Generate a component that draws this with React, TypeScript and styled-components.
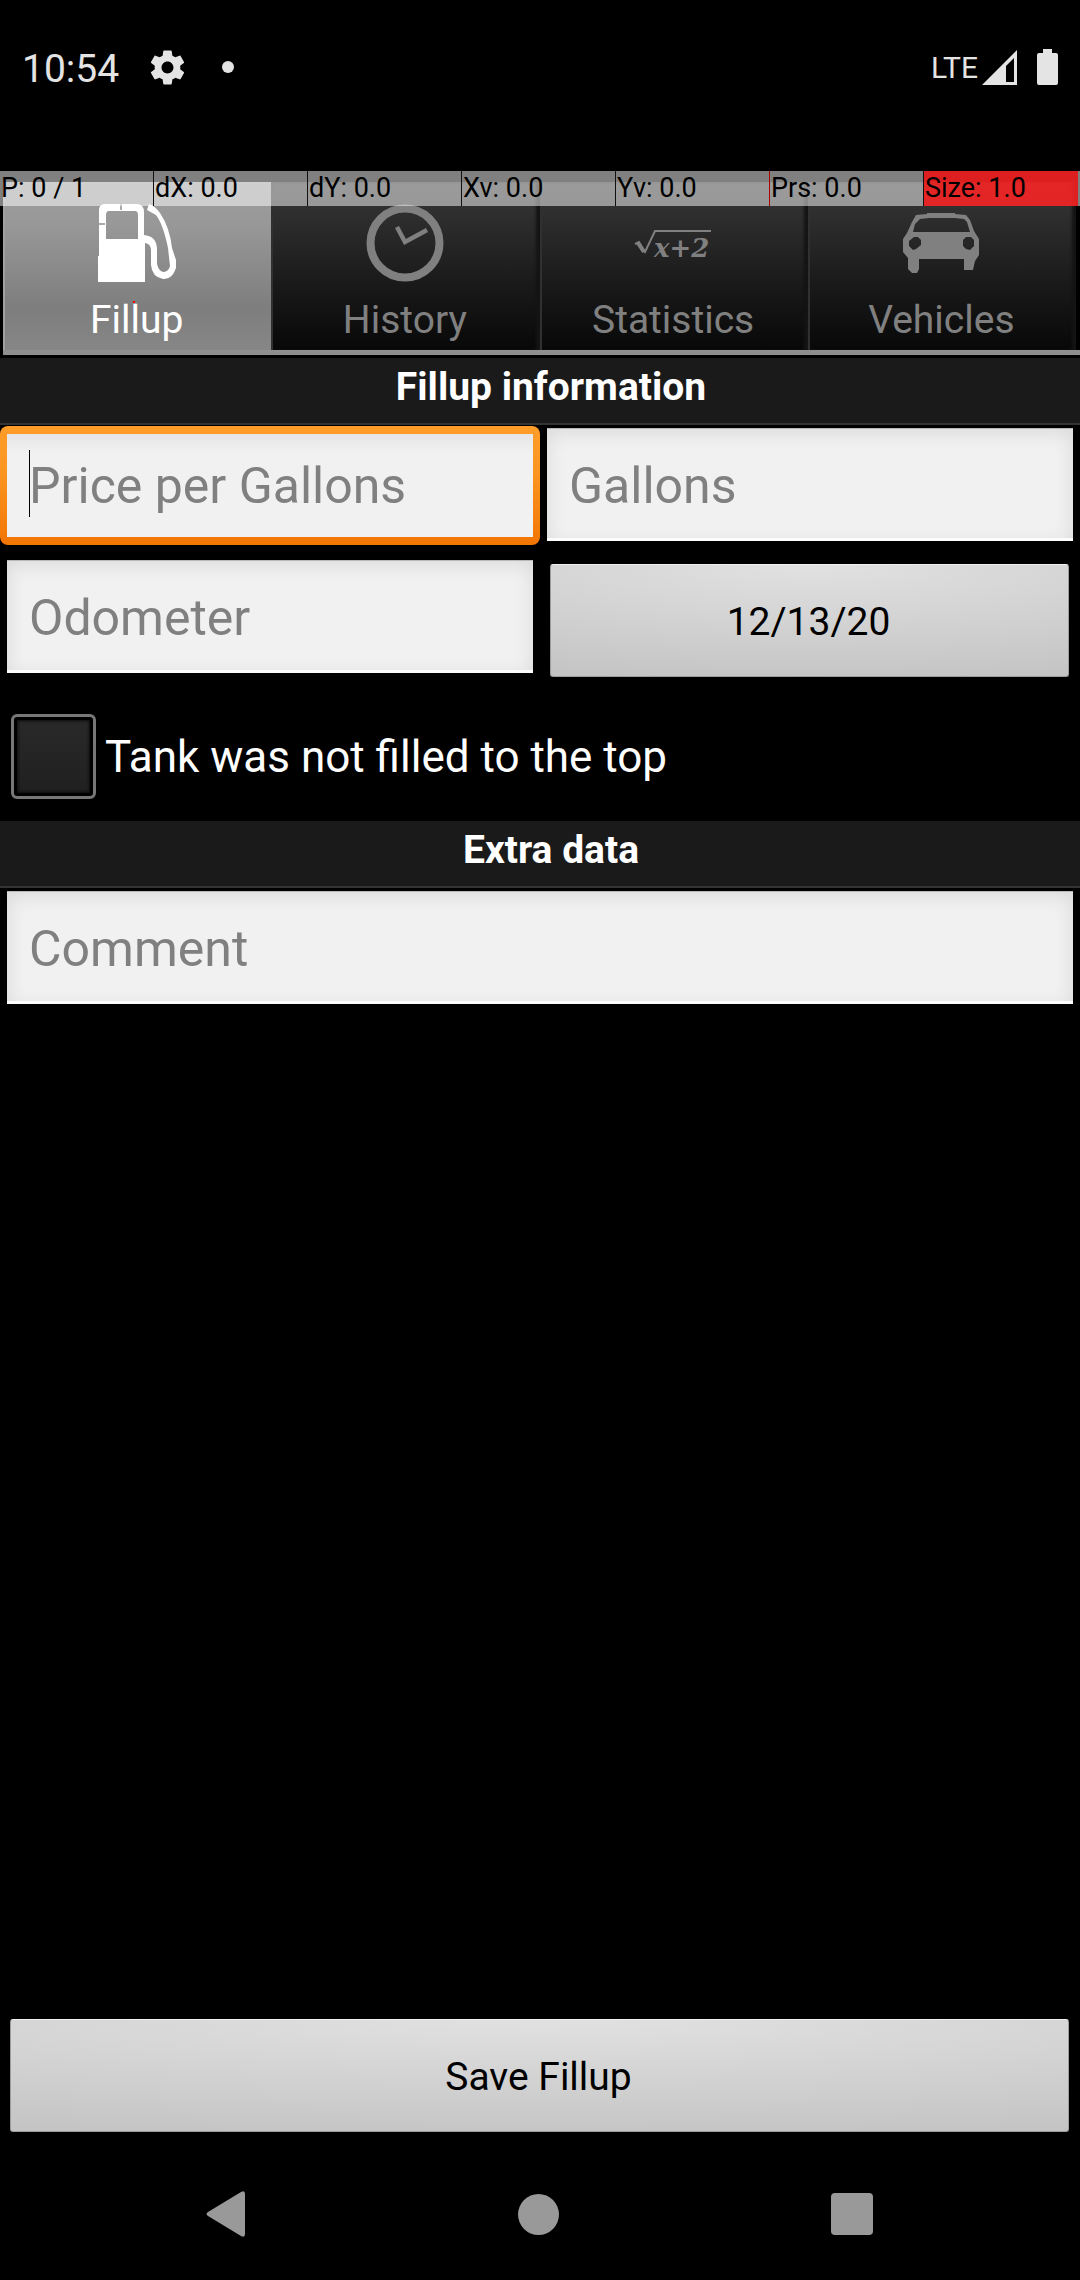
import React from "react";
import styled, { createGlobalStyle, css } from "styled-components";

const GlobalStyle = createGlobalStyle`
  *, *::before, *::after { box-sizing: border-box; }
  body { margin: 0; background: #000; color: #fff; font-family: Roboto, "Liberation Sans", sans-serif; }
  button, input { font: inherit; margin: 0; border-radius: 0; outline: none; }
`;

const Page = styled.div`
  position: relative;
  display: flex;
  flex-direction: column;
  min-height: 100vh;
  background: #000;
`;

const StatusBar = styled.header`
  display: flex;
  align-items: center;
  justify-content: space-between;
  height: 134px;
  padding: 0 22px;
  color: #e4e4e4;
`;

const StatusGroup = styled.div`
  display: flex;
  align-items: center;
`;

const Clock = styled.time`
  font-size: 39px;
  line-height: 46px;
  padding-top: 4px;
  margin-right: 28px;
`;

const Dot = styled.span`
  width: 12px;
  height: 12px;
  margin-left: 34px;
  border-radius: 50%;
  background: #e4e4e4;
`;

const Network = styled.span`
  font-size: 30px;
  line-height: 36px;
  padding-top: 2px;
  margin-right: 4px;
`;

const Battery = styled.svg`
  margin-left: 20px;
`;

const PointerBar = styled.div`
  position: absolute;
  z-index: 1;
  top: 171px;
  left: 0;
  right: 0;
  display: flex;
  height: 35px;
  color: #000;
  font-size: 27px;
  line-height: 35px;
  pointer-events: none;

  &::after {
    content: "";
    width: 2px;
    background: rgba(255, 255, 255, 0.5);
  }
`;

const PointerCell = styled.span<{ $edge?: string; $alert?: boolean }>`
  flex: 1;
  padding-left: 1px;
  white-space: nowrap;
  border-right: 1px solid ${(p) => p.$edge ?? "#111"};
  background: ${(p) => (p.$alert ? "rgba(255, 36, 36, 0.87)" : "rgba(255, 255, 255, 0.5)")};
`;

const PointerMark = styled.i`
  position: absolute;
  top: 301px;
  left: 133px;
  width: 2px;
  height: 2px;
  background: #f00;
`;

const Tabs = styled.nav`
  display: flex;
  margin: 48px 0 3px 3px;
  padding-right: 4px;
  border-bottom: 5px solid #8f8f8f;
`;

const Tab = styled.button<{ $selected?: boolean }>`
  flex: 1;
  display: flex;
  flex-direction: column;
  align-items: center;
  gap: 15px;
  height: 168px;
  padding: 22px 1px 0 0;
  border: 0;
  font-size: 39px;
  line-height: 46px;
  color: #808080;
  background: linear-gradient(#363636, #2e2e2e 20%, #1a1a1a 60%, #080808);
  box-shadow: inset 2px 0 #303030, inset -4px 0 3px #141414;

  ${(p) =>
    p.$selected &&
    css`
      color: #fff;
      background: linear-gradient(#9e9e9e, #989898 25%, #7e7e7e 75%, #868686);
      box-shadow: inset 2px 0 #a0a0a0;
    `}
`;

const SectionTitle = styled.h2`
  margin: 0;
  padding: 1px 0 7px 22px;
  border-bottom: 2px solid #343434;
  background: #1a1a1a;
  font-size: 39px;
  line-height: 57px;
  font-weight: 700;
  text-align: center;
`;

const FieldGrid = styled.div`
  display: grid;
  grid-template-columns: 1fr 1fr;
  row-gap: 12px;
`;

const Field = styled.input<{ $active?: boolean }>`
  display: block;
  min-width: 0;
  height: 113px;
  margin: 3px 7px 4px;
  padding: 2px 22px 0;
  border: 0;
  font-size: 50px;
  color: #000;
  background: #f1f1f1;
  box-shadow: inset 0 1px #b8b8b8, inset 0 -3px #fcfcfc, inset 0 4px 20px rgba(0, 0, 0, 0.1);

  &::placeholder {
    color: #808080;
    opacity: 1;
  }

  ${(p) =>
    p.$active &&
    css`
      height: 119px;
      margin: 1px 0 0;
      padding-top: 0;
      border: solid transparent;
      border-width: 8px 7px;
      border-radius: 8px;
      caret-color: transparent;
      background:
        linear-gradient(#000, #000) 22px 16px / 1px 67px no-repeat padding-box,
        linear-gradient(#e6e6e6, #f1f1f1 18%) padding-box,
        linear-gradient(#ff9d2a, #fb9520 40%, #f27503) border-box;
      box-shadow: none;
    `}
`;

const Comment = styled(Field)`
  width: calc(100% - 14px);
`;

const PushButton = styled.button`
  height: 113px;
  margin: 7px 11px 0 10px;
  padding: 2px 2px 0 0;
  border: 1px solid #9c9c9c;
  border-top-color: #f0f0f0;
  border-radius: 3px;
  font-size: 39px;
  color: #000;
  background: radial-gradient(ellipse 130% 110% at 50% 0, #e1e1e1, #c3c3c3);
`;

const CheckRow = styled.label`
  display: flex;
  align-items: center;
  gap: 9px;
  padding: 37px 11px 22px;
  font-size: 44px;
  line-height: 52px;
`;

const CheckBox = styled.input`
  appearance: none;
  flex: none;
  width: 85px;
  height: 85px;
  border: 3px solid #777;
  border-radius: 6px;
  background: linear-gradient(#292929, #202020);
  box-shadow: inset 0 0 0 3px #000, inset 0 0 3px 4px #0c0c0c;
`;

const Footer = styled.div`
  display: grid;
  margin: auto 0 16px;
`;

const NavBar = styled.nav`
  display: grid;
  grid-template-columns: repeat(3, 29%);
  justify-content: center;
  height: 132px;
  padding-right: 2px;
`;

const NavButton = styled.button`
  display: flex;
  align-items: center;
  justify-content: center;
  padding: 0;
  border: 0;
  background: none;
`;

const PumpIcon = () => (
  <svg width="78" height="78" viewBox="0 0 78 78" fill="none" aria-hidden="true">
    <path
      fillRule="evenodd"
      fill="#fff"
      d="M6 0H40Q46 1 46 8V31Q58 32 59 44V60Q61 68 66 68Q71 67 72 62L70 44Q65 20 58 11L49 6L51 0Q57 2 62 9Q72 24 74 44L78 56V64Q74 76 65 75Q54 73 53 61V46Q53 40 47 39V78H0V52H1V6Q1 1 6 0ZM11 7Q8 7 8 11V35H40V11Q40 7 37 7Z"
    />
    <path d="M23 0V6M1 20H7" stroke="#aaa" strokeWidth="2" />
  </svg>
);

const ClockIcon = () => (
  <svg width="78" height="78" viewBox="0 0 78 78" fill="none" stroke="#808080" aria-hidden="true">
    <circle cx="39" cy="39" r="34.5" strokeWidth="8" />
    <path d="M31 23L39 38L61 26" strokeWidth="4.5" />
  </svg>
);

const FormulaIcon = () => (
  <svg width="78" height="78" viewBox="0 0 78 78" aria-hidden="true">
    <path d="M1 40L5 38L11 48L21 27H77" fill="none" stroke="#808080" strokeWidth="2" />
    <path d="M4 39L10 48" stroke="#808080" strokeWidth="4" />
    <text
      x="20"
      y="53"
      fill="#808080"
      fontFamily="DejaVu Serif, serif"
      fontSize="26"
      fontWeight="700"
      fontStyle="italic"
    >
      x+2
    </text>
  </svg>
);

const CarIcon = () => (
  <svg width="78" height="78" viewBox="0 0 78 78" aria-hidden="true">
    <path
      fillRule="evenodd"
      fill="#808080"
      d="M14 11L25 10V9H53V10L64 11L68 16L72 27L77 35V51L73 57L71 66H62V55H17V65L15 69H10L6 65V54L1 48V35L5 29L10 18ZM18 15L13 20L11 28H68L65 18L62 15L53 14H27ZM12 33L7 37V42L11 46L14 45L19 41V36L16 33ZM64 33L61 36V42L64 45L68 46L72 42V36L69 33Z"
    />
  </svg>
);

const pointerCells = [
  { text: "P: 0 / 1" },
  { text: "dX: 0.0" },
  { text: "dY: 0.0" },
  { text: "Xv: 0.0" },
  { text: "Yv: 0.0", edge: "#a00" },
  { text: "Prs: 0.0" },
  { text: "Size: 1.0", edge: "transparent", alert: true },
];

const tabs = [
  { label: "Fillup", Icon: PumpIcon },
  { label: "History", Icon: ClockIcon },
  { label: "Statistics", Icon: FormulaIcon },
  { label: "Vehicles", Icon: CarIcon },
];

export default function App() {
  return (
    <Page>
      <GlobalStyle />
      <StatusBar>
        <StatusGroup>
          <Clock>10:54</Clock>
          <svg width="41" height="41" viewBox="0 0 24 24" fill="#e4e4e4" aria-hidden="true">
            <path d="M19.43 12.98c.04-.32.07-.64.07-.98s-.03-.66-.07-.98l2.11-1.65c.19-.15.24-.42.12-.64l-2-3.46c-.12-.22-.39-.3-.61-.22l-2.49 1c-.52-.4-1.08-.73-1.69-.98l-.38-2.65C14.46 2.18 14.25 2 14 2h-4c-.25 0-.46.18-.49.42l-.38 2.65c-.61.25-1.17.59-1.69.98l-2.49-1c-.23-.09-.49 0-.61.22l-2 3.46c-.13.22-.07.49.12.64l2.11 1.65c-.04.32-.07.65-.07.98s.03.66.07.98l-2.11 1.65c-.19.15-.24.42-.12.64l2 3.46c.12.22.39.3.61.22l2.49-1c.52.4 1.08.73 1.69.98l.38 2.65c.03.24.24.42.49.42h4c.25 0 .46-.18.49-.42l.38-2.65c.61-.25 1.17-.59 1.69-.98l2.49 1c.23.09.49 0 .61-.22l2-3.46c.12-.22.07-.49-.12-.64l-2.11-1.65zM12 15.5c-1.93 0-3.5-1.57-3.5-3.5s1.57-3.5 3.5-3.5 3.5 1.57 3.5 3.5-1.57 3.5-3.5 3.5z" />
          </svg>
          <Dot />
        </StatusGroup>
        <StatusGroup>
          <Network>LTE</Network>
          <svg width="35" height="35" viewBox="0 0 35 35" fill="#e4e4e4" aria-hidden="true">
            <path fillRule="evenodd" d="M35 0V35H0ZM32 8L24 16V32H32Z" />
          </svg>
          <Battery width="21" height="36" viewBox="0 0 21 36" fill="#e4e4e4" aria-hidden="true">
            <path d="M6 0H15V4H19Q21 4 21 6V34Q21 36 19 36H2Q0 36 0 34V6Q0 4 2 4H6Z" />
          </Battery>
        </StatusGroup>
      </StatusBar>

      <Tabs>
        {tabs.map(({ label, Icon }, i) => (
          <Tab key={label} type="button" $selected={i === 0}>
            <Icon />
            {label}
          </Tab>
        ))}
      </Tabs>

      <SectionTitle>Fillup information</SectionTitle>
      <FieldGrid>
        <Field $active placeholder="Price per Gallons" aria-label="Price per Gallons" />
        <Field placeholder="Gallons" aria-label="Gallons" />
        <Field placeholder="Odometer" aria-label="Odometer" />
        <PushButton type="button">12/13/20</PushButton>
      </FieldGrid>
      <CheckRow>
        <CheckBox type="checkbox" />
        Tank was not filled to the top
      </CheckRow>

      <SectionTitle>Extra data</SectionTitle>
      <Comment placeholder="Comment" aria-label="Comment" />

      <Footer>
        <PushButton type="button">Save Fillup</PushButton>
      </Footer>

      <NavBar>
        <NavButton type="button" aria-label="Back">
          <svg width="40" height="46" viewBox="0 0 40 46" fill="#999" aria-hidden="true">
            <path d="M35 1Q39 -1 39 3V43Q39 47 35 45L2 25Q-1 23 2 21Z" />
          </svg>
        </NavButton>
        <NavButton type="button" aria-label="Home">
          <svg width="41" height="41" viewBox="0 0 41 41" fill="#999" aria-hidden="true">
            <circle cx="20.5" cy="20.5" r="20.5" />
          </svg>
        </NavButton>
        <NavButton type="button" aria-label="Recent apps">
          <svg width="42" height="42" viewBox="0 0 42 42" fill="#999" aria-hidden="true">
            <rect width="42" height="42" rx="4" />
          </svg>
        </NavButton>
      </NavBar>

      <PointerBar aria-hidden="true">
        {pointerCells.map((c) => (
          <PointerCell key={c.text} $edge={c.edge} $alert={c.alert}>
            {c.text}
          </PointerCell>
        ))}
      </PointerBar>
      <PointerMark />
    </Page>
  );
}
